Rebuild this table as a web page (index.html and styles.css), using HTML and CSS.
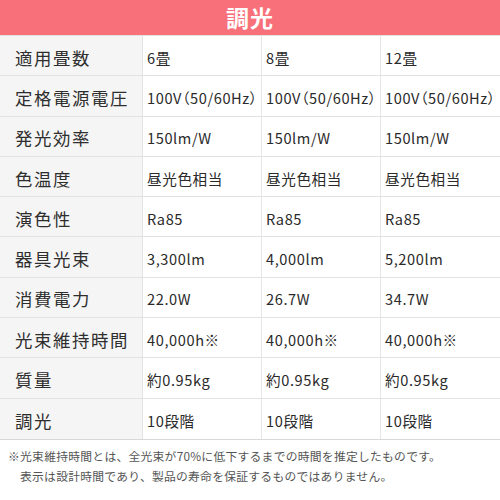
FILE: index.html
```html
<!DOCTYPE html>
<html lang="ja">
<head>
<meta charset="utf-8">
<link rel="stylesheet" href="styles.css">
</head>
<body>
<div class="page">
  <div class="title">調光</div>
  <div class="spec">
    <div class="label">適用畳数</div><div class="val">6畳</div><div class="val">8畳</div><div class="val">12畳</div>
    <div class="label">定格電源電圧</div><div class="val">100V（50/60Hz）</div><div class="val">100V（50/60Hz）</div><div class="val">100V（50/60Hz）</div>
    <div class="label">発光効率</div><div class="val">150lm/W</div><div class="val">150lm/W</div><div class="val">150lm/W</div>
    <div class="label">色温度</div><div class="val">昼光色相当</div><div class="val">昼光色相当</div><div class="val">昼光色相当</div>
    <div class="label">演色性</div><div class="val">Ra85</div><div class="val">Ra85</div><div class="val">Ra85</div>
    <div class="label">器具光束</div><div class="val">3,300lm</div><div class="val">4,000lm</div><div class="val">5,200lm</div>
    <div class="label">消費電力</div><div class="val">22.0W</div><div class="val">26.7W</div><div class="val">34.7W</div>
    <div class="label">光束維持時間</div><div class="val">40,000h※</div><div class="val">40,000h※</div><div class="val">40,000h※</div>
    <div class="label">質量</div><div class="val">約0.95kg</div><div class="val">約0.95kg</div><div class="val">約0.95kg</div>
    <div class="label">調光</div><div class="val">10段階</div><div class="val">10段階</div><div class="val">10段階</div>
  </div>
  <div class="notes">
    <p class="note">※光束維持時間とは、全光束が70%に低下するまでの時間を推定したものです。</p>
    <p class="note indent">表示は設計時間であり、製品の寿命を保証するものではありません。</p>
  </div>
</div>
</body>
</html>
```

FILE: styles.css
```css
html, body {
  margin: 0;
  padding: 0;
  background: #ffffff;
}
body {
  font-family: "Noto Sans CJK JP", "Noto Sans", sans-serif;
  color: #333333;
}
.page {
  width: 500px;
}
.title {
  height: 35px;
  background: #f8707a;
  color: #ffffff;
  font-size: 23px;
  font-weight: 700;
  letter-spacing: 1px;
  display: flex;
  align-items: center;
  justify-content: center;
  line-height: 1;
}
.spec {
  display: grid;
  grid-template-columns: 143px 119px 119px 119px;
  grid-auto-rows: 40.3px;
  border-top: 1px solid #e2e2e2;
  border-bottom: 1px solid #d8d8d8;
}
.label, .val {
  display: flex;
  align-items: center;
  border-bottom: 1px solid #e2e2e2;
  box-sizing: border-box;
  white-space: nowrap;
  padding-top: 3px;
}
.spec > :nth-last-child(-n+4) {
  border-bottom: none;
}
.label {
  background: #f5f5f5;
  font-size: 17.4px;
  letter-spacing: 1.6px;
  padding-left: 15px;
  color: #2e2e2e;
  border-right: 1px solid #e2e2e2;
}
.val {
  font-size: 14.6px;
  letter-spacing: 0.6px;
  padding-left: 4px;
  color: #2a2a2a;
  border-right: 1px solid #e6e6e6;
  font-feature-settings: "palt" 1;
}
.val:nth-child(4n) {
  border-right: none;
}
.notes {
  padding: 6px 0 0 8px;
}
.note {
  margin: 0;
  font-size: 11.8px;
  line-height: 20px;
  color: #555555;
  letter-spacing: 0.25px;
}
.indent {
  padding-left: 12px;
}
```
